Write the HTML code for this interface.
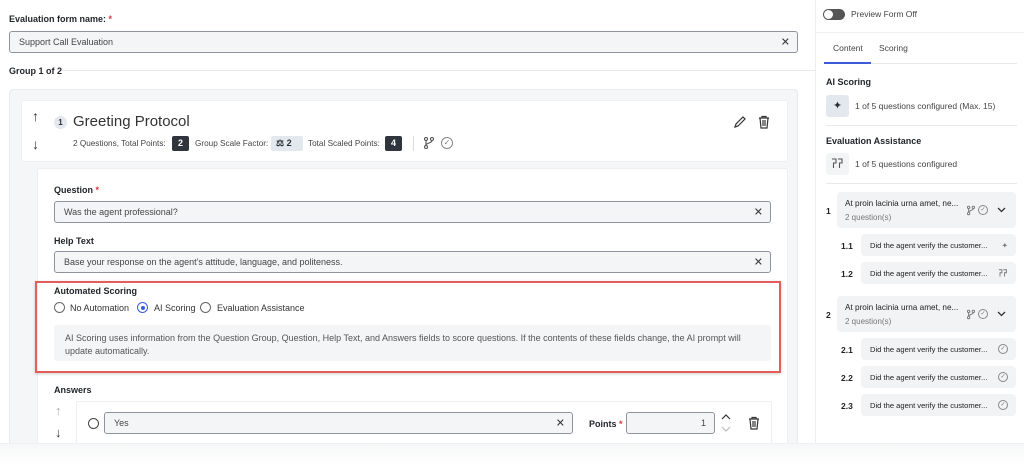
<!DOCTYPE html>
<html><head><meta charset="utf-8"><style>
*{box-sizing:border-box;margin:0;padding:0}
body{width:1024px;height:466px;overflow:hidden;background:#fff;font-family:"Liberation Sans",sans-serif;color:#2b2f36;position:relative}
.a{position:absolute;white-space:nowrap}
.lbl{font-size:9px;font-weight:bold;color:#1f2329}
.req{color:#d9363e}
.inp{position:absolute;background:#f4f5f7;border:1px solid #8e939c;border-radius:3px;font-size:9px;color:#444;padding-left:9px;display:flex;align-items:center}
.x{position:absolute;right:7px;top:50%;transform:translateY(-50%);font-size:11px;color:#333}
.sm{font-size:8.5px;color:#444}
.db{position:absolute;background:#30353d;color:#fff;font-size:9px;font-weight:bold;border-radius:2px;text-align:center;line-height:15px;height:15px}
.rad{position:absolute;width:11px;height:11px;border:1px solid #666;border-radius:50%}
.pill{position:absolute;background:#f2f3f5;border-radius:4px;font-size:7.6px;color:#222;padding-left:9px;display:flex;align-items:center}
.num{position:absolute;font-size:8.5px;font-weight:bold;color:#222}
.chk{position:absolute;width:10px;height:10px;border:1px solid #888;border-radius:50%;font-size:6px;line-height:8px;text-align:center;color:#777}
</style></head><body>
<div class="a lbl" style="left:9px;top:14px">Evaluation form name: <span class="req">*</span></div>
<div class="inp" style="left:9px;top:31px;width:789px;height:22px">Support Call Evaluation<span class="x">✕</span></div>
<div class="a lbl" style="left:9px;top:66px">Group 1 of 2</div>
<div class="a" style="left:62px;top:70px;width:753px;height:1px;background:#e6e8eb"></div>

<div class="a" style="left:9px;top:89px;width:789px;height:360px;background:#f5f6f8;border:1px solid #e8eaed;border-radius:4px"></div>
<div class="a" style="left:21px;top:100px;width:767px;height:62px;background:#fff;border:1px solid #eceef1;border-radius:3px"></div>
<div class="a" style="left:32px;top:108px;font-size:14px;color:#333">↑</div>
<div class="a" style="left:32px;top:136px;font-size:14px;color:#333">↓</div>
<div class="a" style="left:54px;top:116px;width:13px;height:13px;border-radius:50%;background:#e3e7ee;font-size:8px;font-weight:bold;text-align:center;line-height:13px">1</div>
<div class="a" style="left:73px;top:113px;font-size:15px;color:#333">Greeting Protocol</div>
<div class="a sm" style="left:73px;top:139px;font-size:8.2px">2 Questions, Total Points:</div>
<div class="db" style="left:172px;top:136px;width:17px">2</div>
<div class="a sm" style="left:195px;top:139px;font-size:8.2px">Group Scale Factor:</div>
<div class="a" style="left:271px;top:136px;width:32px;height:15px;background:#e3e8ef;border-radius:2px;font-size:9px;font-weight:bold;line-height:15px;padding-left:5px">⚖ 2</div>
<div class="a sm" style="left:308px;top:139px;font-size:8.2px">Total Scaled Points:</div>
<div class="db" style="left:385px;top:136px;width:17px">4</div>
<div class="a" style="left:413px;top:136px;width:1px;height:15px;background:#ddd"></div>
<svg class="a" style="left:423px;top:136px" width="12" height="14" viewBox="0 0 12 14" fill="none" stroke="#555" stroke-width="1.1"><circle cx="3" cy="11" r="1.5"/><circle cx="3" cy="3" r="1.5"/><circle cx="9" cy="3" r="1.5"/><path d="M3 4.5v5M9 4.5c0 3-6 2-6 5"/></svg>
<div class="chk" style="left:441px;top:137px;width:12px;height:12px;font-size:8px;line-height:10px">✓</div>
<svg class="a" style="left:733px;top:115px" width="14" height="14" viewBox="0 0 14 14" fill="none" stroke="#333" stroke-width="1.2"><path d="M2 12l1-3 7-7 2 2-7 7z"/></svg>
<svg class="a" style="left:758px;top:115px" width="12" height="14" viewBox="0 0 12 14" fill="none" stroke="#333" stroke-width="1.2"><path d="M1 3h10M4 3V1.5h4V3M2 3l1 10h6l1-10M5 5v6M7 5v6"/></svg>

<div class="a" style="left:37px;top:168px;width:751px;height:290px;background:#fff;border:1px solid #eceef1;border-radius:3px"></div>
<div class="a lbl" style="left:54px;top:185px">Question <span class="req">*</span></div>
<div class="inp" style="left:54px;top:201px;width:717px;height:22px">Was the agent professional?<span class="x">✕</span></div>
<div class="a lbl" style="left:54px;top:236px">Help Text</div>
<div class="inp" style="left:54px;top:251px;width:717px;height:22px">Base your response on the agent’s attitude, language, and politeness.<span class="x">✕</span></div>
<div class="a" style="left:35px;top:281px;width:746px;height:92px;border:2px solid #e35d5d;box-shadow:0 1px 3px rgba(0,0,0,.2)"></div>
<div class="a lbl" style="left:54px;top:286px">Automated Scoring</div>
<div class="rad" style="left:54px;top:302px"></div>
<div class="a" style="left:70px;top:303px;font-size:9px;color:#333">No Automation</div>
<div class="rad" style="left:137px;top:302px;border-color:#3b5bdb"><div style="position:absolute;left:2.5px;top:2.5px;width:4px;height:4px;border-radius:50%;background:#3b5bdb"></div></div>
<div class="a" style="left:154px;top:303px;font-size:9px;color:#333">AI Scoring</div>
<div class="rad" style="left:200px;top:302px"></div>
<div class="a" style="left:217px;top:303px;font-size:9px;color:#333">Evaluation Assistance</div>
<div class="a" style="left:54px;top:325px;width:717px;height:36px;background:#f4f5f7;border-radius:3px;font-size:9px;color:#555;padding:7px 11px;line-height:13px">AI Scoring uses information from the Question Group, Question, Help Text, and Answers fields to score questions. If the contents of these fields change, the AI prompt will<br>update automatically.</div>
<div class="a lbl" style="left:54px;top:385px">Answers</div>
<div class="a" style="left:55px;top:403px;font-size:13px;color:#aaa">↑</div>
<div class="a" style="left:55px;top:425px;font-size:13px;color:#333">↓</div>
<div class="a" style="left:76px;top:401px;width:696px;height:60px;border:1px solid #eceef1;border-radius:3px"></div>
<div class="rad" style="left:88px;top:418px;border-color:#444"></div>
<div class="inp" style="left:104px;top:412px;width:469px;height:22px">Yes<span class="x">✕</span></div>
<div class="a lbl" style="left:589px;top:419px">Points <span class="req">*</span></div>
<div class="inp" style="left:626px;top:412px;width:89px;height:22px;justify-content:flex-end;padding-right:8px">1</div>
<svg class="a" style="left:721px;top:413px" width="10" height="20" viewBox="0 0 10 20" fill="none" stroke-width="1.2"><path d="M1 6l4-4 4 4" stroke="#333"/><path d="M1 14l4 4 4-4" stroke="#bbb"/></svg>
<svg class="a" style="left:748px;top:416px" width="12" height="14" viewBox="0 0 12 14" fill="none" stroke="#333" stroke-width="1.2"><path d="M1 3h10M4 3V1.5h4V3M2 3l1 10h6l1-10M5 5v6M7 5v6"/></svg>

<!-- right panel -->
<div class="a" style="left:815px;top:0;width:1px;height:466px;background:#eceef1"></div>
<div class="a" style="left:823px;top:9px;width:22px;height:11px;border-radius:6px;background:#555"><div style="position:absolute;left:1px;top:1px;width:9px;height:9px;border-radius:50%;background:#fff"></div></div>
<div class="a sm" style="left:851px;top:9px">Preview Form Off</div>
<div class="a" style="left:816px;top:32px;width:208px;height:1px;background:#eef0f2"></div>
<div class="a sm" style="left:833px;top:43px">Content</div>
<div class="a sm" style="left:879px;top:43px">Scoring</div>
<div class="a" style="left:824px;top:63px;width:193px;height:1px;background:#e6e8eb"></div>
<div class="a" style="left:824px;top:62px;width:47px;height:2px;background:#3b5bdb"></div>
<div class="a lbl" style="left:826px;top:77px">AI Scoring</div>
<div class="a" style="left:826px;top:95px;width:23px;height:22px;background:#e3e8ef;border-radius:3px;text-align:center;line-height:22px;font-size:11px">✦</div>
<div class="a sm" style="left:855px;top:101px">1 of 5 questions configured (Max. 15)</div>
<div class="a" style="left:826px;top:125px;width:191px;height:1px;background:#e6e8eb"></div>
<div class="a lbl" style="left:826px;top:136px">Evaluation Assistance</div>
<div class="a" style="left:826px;top:153px;width:23px;height:22px;background:#f3f4f6;border-radius:3px"></div>
<svg class="a" style="left:831px;top:158px" width="13" height="12" viewBox="0 0 13 12" fill="none" stroke="#555" stroke-width="1.1"><path d="M1 1h4v4H2.5v5M7 1h4v4H8.5v5"/></svg>
<div class="a sm" style="left:855px;top:159px">1 of 5 questions configured</div>
<div class="a" style="left:826px;top:183px;width:191px;height:1px;background:#e6e8eb"></div>

<div class="num" style="left:826px;top:206px">1</div>
<div class="a" style="left:837px;top:192px;width:179px;height:36px;background:#f2f3f5;border-radius:4px"></div>
<div class="a" style="left:845px;top:199px;font-size:8.2px;color:#222">At proin lacinia urna amet, ne...</div>
<div class="a" style="left:845px;top:213px;font-size:8px;color:#777">2 question(s)</div>
<svg class="a" style="left:966px;top:205px" width="10" height="11" viewBox="0 0 12 14" fill="none" stroke="#777" stroke-width="1.2"><circle cx="3" cy="11" r="1.5"/><circle cx="3" cy="3" r="1.5"/><circle cx="9" cy="3" r="1.5"/><path d="M3 4.5v5M9 4.5c0 3-6 2-6 5"/></svg>
<div class="chk" style="left:978px;top:205px">✓</div>
<svg class="a" style="left:997px;top:207px" width="9" height="6" viewBox="0 0 9 6" fill="none" stroke="#333" stroke-width="1.3"><path d="M1 1l3.5 3.5L8 1"/></svg>
<div class="num" style="left:841px;top:241px">1.1</div>
<div class="pill" style="left:861px;top:234px;width:155px;height:22px">Did the agent verify the customer...<span style="position:absolute;right:8px;color:#777">✦</span></div>
<div class="num" style="left:841px;top:269px">1.2</div>
<div class="pill" style="left:861px;top:262px;width:155px;height:22px">Did the agent verify the customer...</div>
<svg class="a" style="left:998px;top:269px" width="10" height="9" viewBox="0 0 13 12" fill="none" stroke="#777" stroke-width="1.2"><path d="M1 1h4v4H2.5v5M7 1h4v4H8.5v5"/></svg>

<div class="num" style="left:826px;top:310px">2</div>
<div class="a" style="left:837px;top:296px;width:179px;height:36px;background:#f2f3f5;border-radius:4px"></div>
<div class="a" style="left:845px;top:303px;font-size:8.2px;color:#222">At proin lacinia urna amet, ne...</div>
<div class="a" style="left:845px;top:317px;font-size:8px;color:#777">2 question(s)</div>
<svg class="a" style="left:966px;top:309px" width="10" height="11" viewBox="0 0 12 14" fill="none" stroke="#777" stroke-width="1.2"><circle cx="3" cy="11" r="1.5"/><circle cx="3" cy="3" r="1.5"/><circle cx="9" cy="3" r="1.5"/><path d="M3 4.5v5M9 4.5c0 3-6 2-6 5"/></svg>
<div class="chk" style="left:978px;top:309px">✓</div>
<svg class="a" style="left:997px;top:311px" width="9" height="6" viewBox="0 0 9 6" fill="none" stroke="#333" stroke-width="1.3"><path d="M1 1l3.5 3.5L8 1"/></svg>
<div class="num" style="left:841px;top:345px">2.1</div>
<div class="pill" style="left:861px;top:338px;width:155px;height:22px">Did the agent verify the customer...</div><div class="chk" style="left:998px;top:344px">✓</div>
<div class="num" style="left:841px;top:373px">2.2</div>
<div class="pill" style="left:861px;top:366px;width:155px;height:22px">Did the agent verify the customer...</div><div class="chk" style="left:998px;top:372px">✓</div>
<div class="num" style="left:841px;top:401px">2.3</div>
<div class="pill" style="left:861px;top:394px;width:155px;height:22px">Did the agent verify the customer...</div><div class="chk" style="left:998px;top:400px">✓</div>

<div class="a" style="left:0;top:443px;width:1024px;height:23px;background:linear-gradient(#f6f7f8,#fff);border-top:1px solid #eef0f2"></div>
</body></html>
